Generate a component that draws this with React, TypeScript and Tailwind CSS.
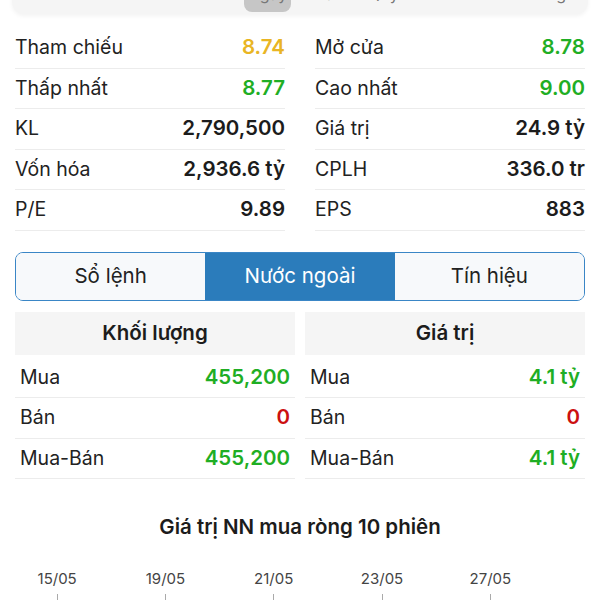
const GREEN = "text-[#1fae24]";

type Stat = { label: string; value: string; color?: string };

const leftStats: Stat[] = [
  { label: "Tham chiếu", value: "8.74", color: "text-[#e9b524]" },
  { label: "Thấp nhất", value: "8.77", color: GREEN },
  { label: "KL", value: "2,790,500" },
  { label: "Vốn hóa", value: "2,936.6 tỷ" },
  { label: "P/E", value: "9.89" },
];

const rightStats: Stat[] = [
  { label: "Mở cửa", value: "8.78", color: GREEN },
  { label: "Cao nhất", value: "9.00", color: GREEN },
  { label: "Giá trị", value: "24.9 tỷ" },
  { label: "CPLH", value: "336.0 tr" },
  { label: "EPS", value: "883" },
];

const periods = ["1T", "3T", "6T", "1N", "Ngày", "Tuần", "Quý"];

const dates = ["15/05", "19/05", "21/05", "23/05", "27/05"];

function StatColumn({ items }: { items: Stat[] }) {
  return (
    <div className="flex flex-col">
      {items.map((s) => (
        <div
          key={s.label}
          className="flex h-[40.5px] items-center justify-between border-b border-[#ececec]"
        >
          <span className="text-[19.5px] text-[#222]">{s.label}</span>
          <span className={`text-[20.5px] font-semibold ${s.color ?? "text-[#1c1c1c]"}`}>{s.value}</span>
        </div>
      ))}
    </div>
  );
}

function ForeignColumn({ title, buy, net }: { title: string; buy: string; net: string }) {
  const rows = [
    { label: "Mua", value: buy, color: GREEN },
    { label: "Bán", value: "0", color: "text-[#cc1010]" },
    { label: "Mua-Bán", value: net, color: GREEN },
  ];
  return (
    <div className="flex flex-col">
      <div className="flex h-[43px] items-center justify-center bg-[#f5f5f5] text-[20.5px] font-semibold text-[#1c1c1c]">
        {title}
      </div>
      <div className="mt-[3px] flex flex-col">
        {rows.map((r) => (
          <div
            key={r.label}
            className="flex h-[40.5px] items-center justify-between border-b border-[#ececec] px-[5px]"
          >
            <span className="text-[19.5px] text-[#222]">{r.label}</span>
            <span className={`text-[20.5px] font-semibold ${r.color}`}>{r.value}</span>
          </div>
        ))}
      </div>
    </div>
  );
}

export default function App() {
  return (
    <div className="h-[600px] w-[600px] overflow-hidden bg-white font-['Inter',sans-serif]">
      {/* period selector, mostly scrolled off the top */}
      <div className="mx-[12px] mt-[-30px] flex h-[44px] items-end gap-[11px] rounded-[12px] bg-[#f5f5f5] pb-[2px] pr-[22px] shadow-[0_2px_4px_rgba(0,0,0,0.05)]">
        {periods.map((p, i) => (
          <div
            key={p}
            className={`flex h-[38px] w-[47px] items-center justify-center rounded-[8px] text-[16px] text-[#777] ${
              i === 4 ? "bg-[#c6c6c6] text-[#333]" : ""
            }`}
          >
            <span className="translate-y-[1px]">{p}</span>
          </div>
        ))}
        <div className="ml-auto flex h-[38px] items-center text-[16px] text-[#777]">
          <span className="translate-y-[1px]">ĝ</span>
        </div>
      </div>

      <div className="mt-[14px] grid grid-cols-2 gap-x-[30px] px-[15px]">
        <StatColumn items={leftStats} />
        <StatColumn items={rightStats} />
      </div>

      <div className="mx-[15px] mt-[21px] flex h-[49px] overflow-hidden rounded-[8px] border-[1.5px] border-[#3a86c6] text-[20.5px]">
        <div className="flex flex-1 items-center justify-center bg-[#f7f9fb] text-[#222]">Sổ lệnh</div>
        <div className="flex flex-1 items-center justify-center bg-[#2b7cbb] text-white">Nước ngoài</div>
        <div className="flex flex-1 items-center justify-center bg-[#f7f9fb] text-[#222]">Tín hiệu</div>
      </div>

      <div className="mt-[11px] grid grid-cols-2 gap-x-[10px] px-[15px]">
        <ForeignColumn title="Khối lượng" buy="455,200" net="455,200" />
        <ForeignColumn title="Giá trị" buy="4.1 tỷ" net="4.1 tỷ" />
      </div>

      <div className="mt-[33px] text-center text-[20.5px] font-semibold text-[#1c1c1c]">
        Giá trị NN mua ròng 10 phiên
      </div>

      <div className="mt-[25px] flex pl-[3px]">
        {dates.map((d) => (
          <div key={d} className="flex w-[108.3px] flex-col items-center">
            <span className="text-[15px] text-[#444]">{d}</span>
            <span className="mt-[4px] h-[12px] w-px bg-[#aaa]" />
          </div>
        ))}
      </div>
    </div>
  );
}
